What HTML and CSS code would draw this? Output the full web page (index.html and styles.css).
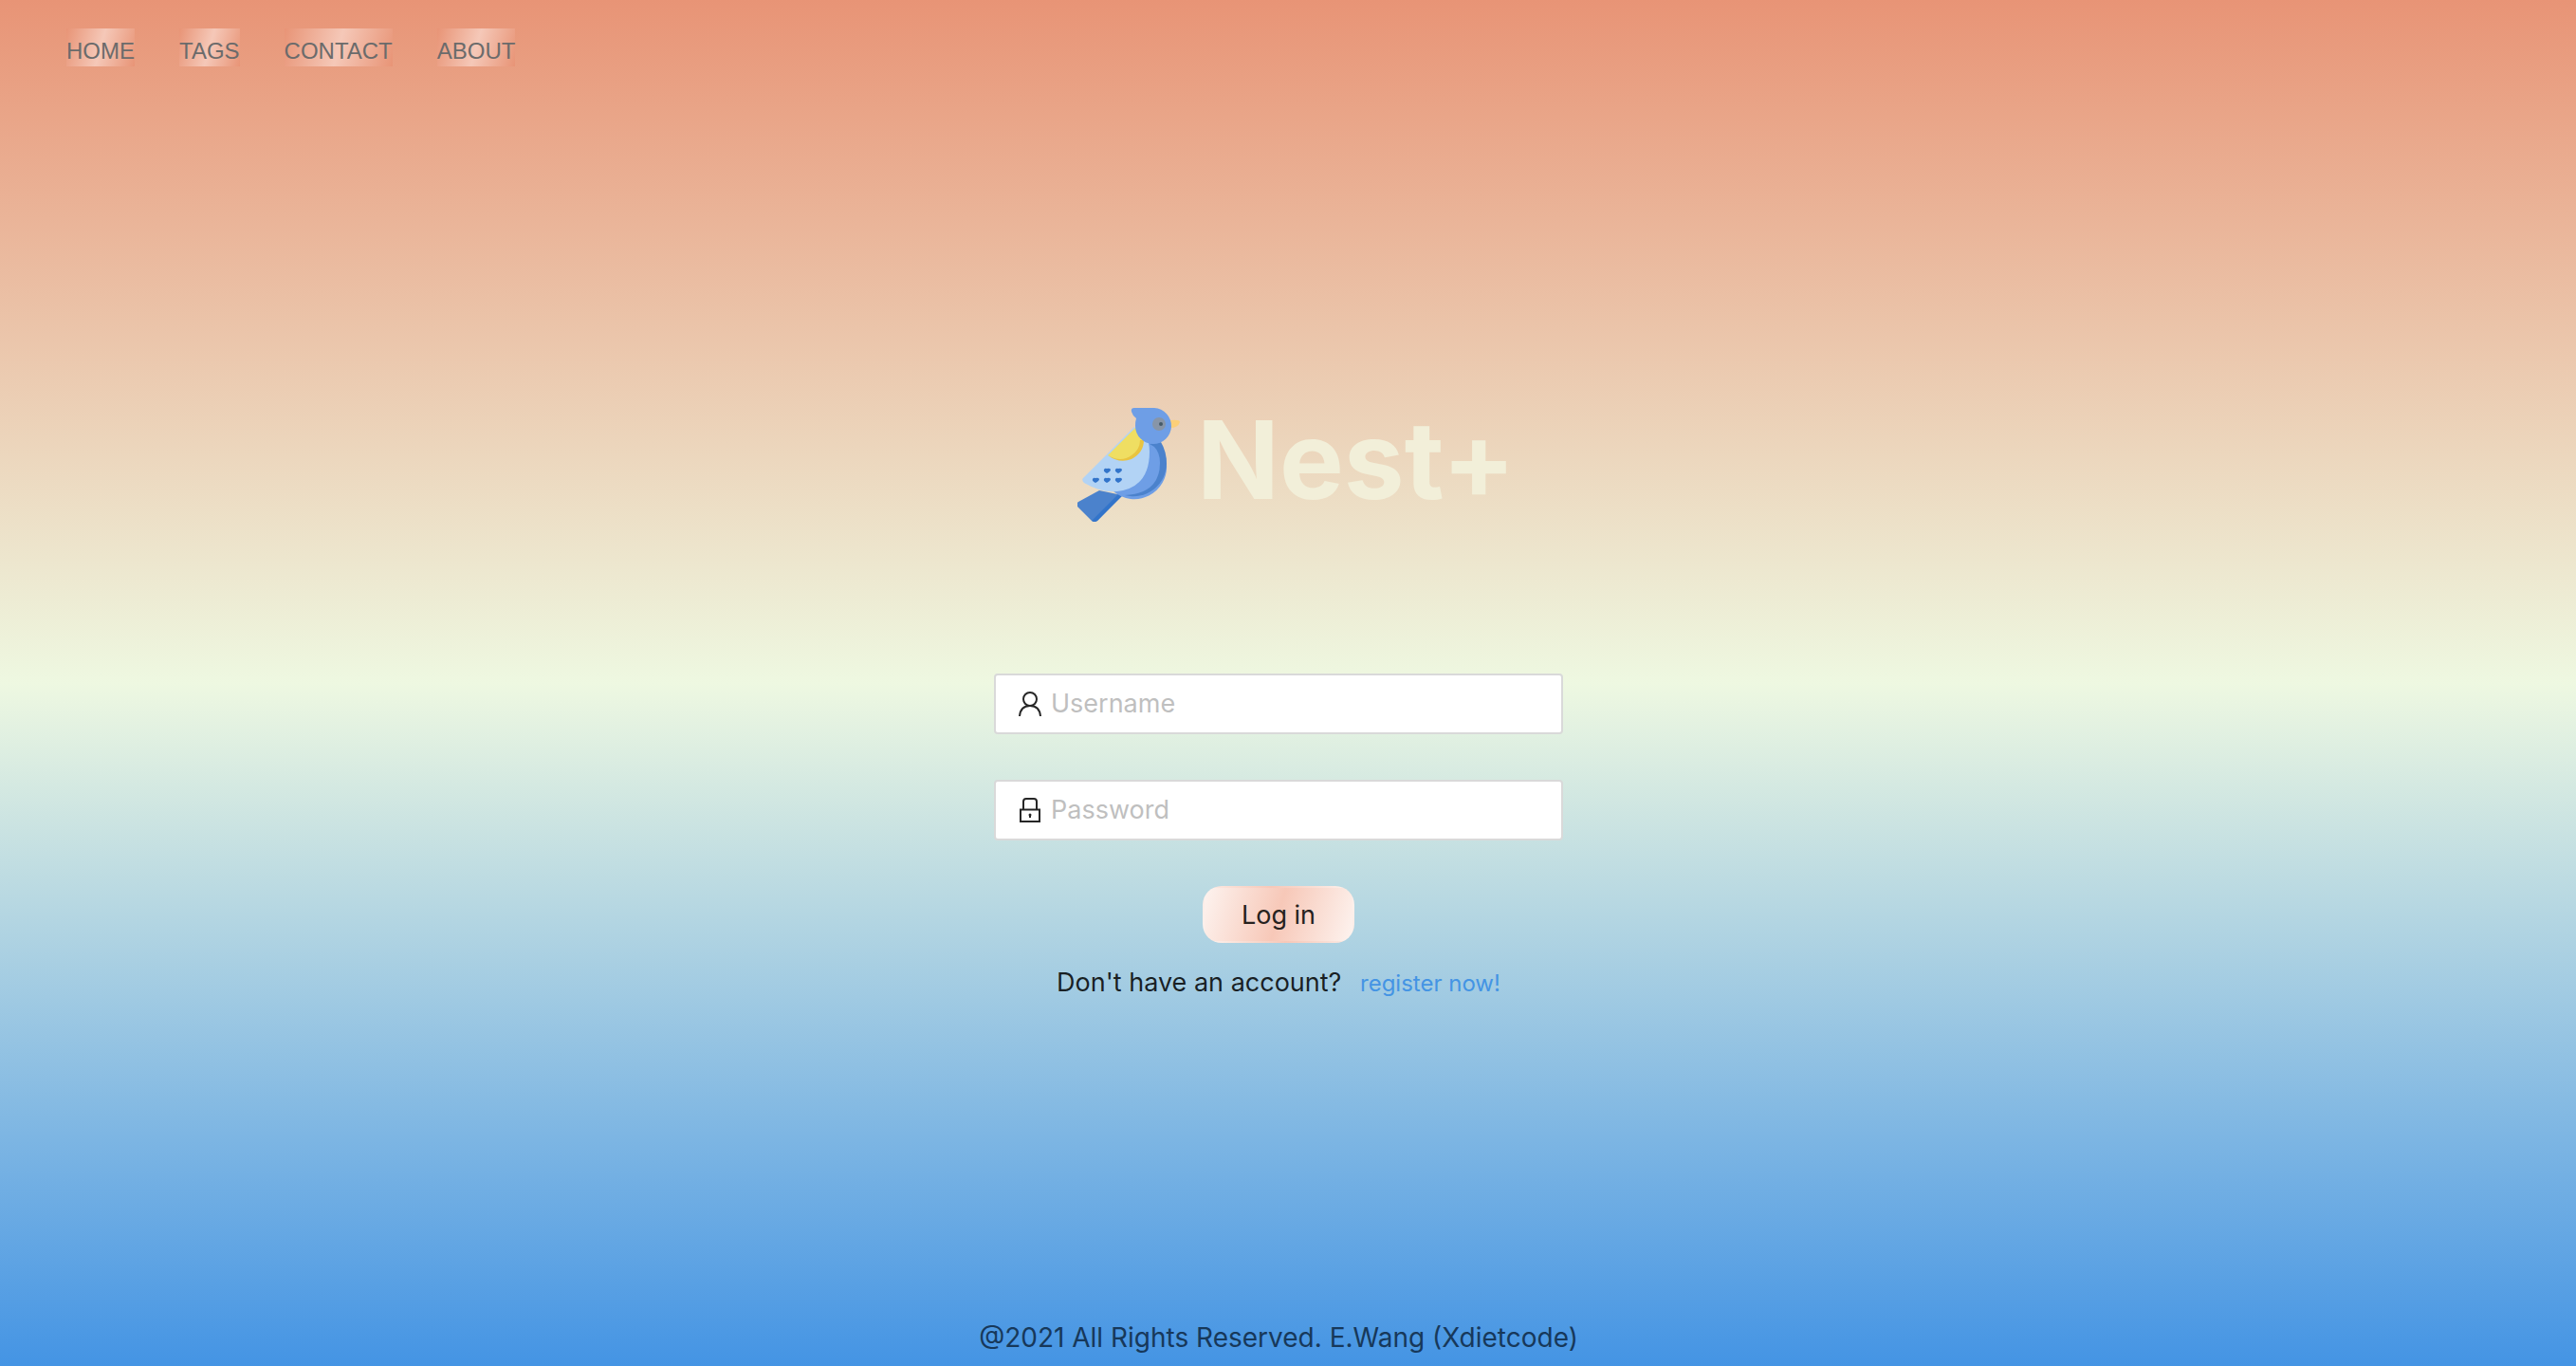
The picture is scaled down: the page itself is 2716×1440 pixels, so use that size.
FILE: index.html
```html
<!DOCTYPE html>
<html lang="en">
<head>
<meta charset="utf-8">
<meta name="viewport" content="width=device-width, initial-scale=1">
<title>Nest+</title>
<link rel="stylesheet" href="styles.css">
</head>
<body>
<div class="page">
  <nav class="nav">
    <a class="nav-link" href="#home">HOME</a>
    <a class="nav-link" href="#tags">TAGS</a>
    <a class="nav-link" href="#contact">CONTACT</a>
    <a class="nav-link" href="#about">ABOUT</a>
  </nav>
  <main class="login">
    <div class="brand">
      <svg class="bird" viewBox="16 0 110 120" aria-hidden="true">
        <path d="M17 99 39 87 63 92 37 119Q34 121 31 119L16 104Q14 101 17 99Z" fill="#4b82cc"/>
        <path d="M31 119 62 88 64 92 37 119Q34 121 31 119Z" fill="#3274ca"/>
        <path d="M86 32Q111 42 110 60A34 34 0 0 1 54 88Z" fill="#6e9ee6"/>
        <path d="M92 38 104 36Q110 46 110 59A35 35 0 0 1 66 92Q103 90 103 58 103 47 97 41Z" fill="#4b82cc"/>
        <path d="M76 20 22 74Q20 76 23 79 42 90 58 88 92 84 92 46 92 41 91 37Z" fill="#b2d3f5"/>
        <path d="M78 20 48 50Q64 60 77 49 86 41 86 30Z" fill="#efde62"/>
        <path d="M82 34H86Q86 47 73 54 60 59 48 50 62 58 73 50 82 44 82 34Z" fill="#e9c440"/>
        <path d="M114 13Q124 12 124 15 122 21 114 21Z" fill="#fccf78"/>
        <path d="M97 0H76Q72 0 73 4 74 8 78 11 77 14 77 19A19 19 0 1 0 97 0Z" fill="#6e9ee6"/>
        <circle cx="102" cy="17" r="7" fill="#8795a8"/>
        <circle cx="104" cy="17" r="2" fill="#455a68"/>
        <g fill="#3274ca">
          <path id="heart" d="M47 69Q43 67 44 65 45 63 47 64 50 63 51 65 51 67 47 69Z"/>
          <use href="#heart" x="12"/>
          <use href="#heart" x="-12" y="10"/>
          <use href="#heart" y="10"/>
          <use href="#heart" x="12" y="10"/>
        </g>
      </svg>
      <h1 class="title">Nest+</h1>
    </div>
    <form class="form">
      <label class="field">
        <svg class="icon" viewBox="0 0 24 26" fill="none" stroke="#262626" stroke-width="2" aria-hidden="true"><circle cx="12" cy="8" r="7"/><path d="M1 26Q2 15 12 15T23 26"/></svg>
        <input class="input" type="text" placeholder="Username" aria-label="Username">
      </label>
      <label class="field">
        <svg class="icon" viewBox="0 0 24 26" fill="none" stroke="#262626" stroke-width="2" aria-hidden="true"><path d="M2 12.500H22V25H2ZM5 12V4Q5 1 8 1H16Q19 1 19 4V12M12 17V21"/><circle cx="12" cy="18" r="1.500" fill="#262626" stroke="none"/></svg>
        <input class="input" type="password" placeholder="Password" aria-label="Password">
      </label>
      <button class="submit" type="submit">Log in</button>
    </form>
    <p class="signup">Don't have an account? <a class="register" href="#register">register now!</a></p>
  </main>
  <footer class="footer">@2021 All Rights Reserved. E.Wang (Xdietcode)</footer>
</div>
</body>
</html>
```
FILE: styles.css
```css
* { box-sizing: border-box; }

body {
  margin: 0;
  font-family: Inter, "Liberation Sans", sans-serif;
  color: rgba(0, 0, 0, 0.85);
}

.page {
  min-height: 100vh;
  display: flex;
  flex-direction: column;
  padding-right: 20px;
  background: linear-gradient(180deg, #e89476 0%, #eef8e1 50%, #4494e4 100%);
}

.nav {
  display: flex;
  gap: 47px;
  padding: 30px 70px;
  font: 24px/40px "Liberation Sans", Arial, sans-serif;
}

.nav-link {
  height: 40px;
  padding-top: 4px;
  color: #6b6b6b;
  text-decoration: none;
  background: linear-gradient(106deg, #e89476, #f5c8b8, #e89476);
}

.login {
  flex: 1;
  display: flex;
  flex-direction: column;
  align-items: center;
  padding-top: 330px;
}

.brand {
  display: flex;
  align-items: flex-start;
  gap: 16px;
  padding-left: 38px;
  margin-bottom: 160px;
}

.bird {
  width: 110px;
  height: 120px;
}

.title {
  margin: 0;
  font-size: 114px;
  line-height: 110px;
  font-weight: 700;
  color: #f2efd9;
}

.form {
  width: 100%;
  max-width: 600px;
  display: flex;
  flex-direction: column;
  align-items: center;
  gap: 48px;
}

.field {
  width: 100%;
  height: 64px;
  display: flex;
  align-items: center;
  gap: 10px;
  padding: 0 24px;
  background: #fff;
  border: 2px solid #d9d9d9;
  border-radius: 4px;
}

.icon {
  width: 24px;
  height: 26px;
  flex: none;
}

.input {
  flex: 1;
  min-width: 0;
  padding: 0;
  border: 0;
  outline: 0;
  background: none;
  font: 27px/36px Inter, sans-serif;
  color: inherit;
}

.input::placeholder { color: #bfbfbf; opacity: 1; }

.submit {
  width: 160px;
  height: 60px;
  padding: 2px 0 0;
  border: 2px solid transparent;
  border-radius: 20px;
  background: linear-gradient(106deg, #fdf3ef, #f7c8b8, #fdf3ef);
  font: 27px/40px Inter, sans-serif;
  color: #262220;
}

.signup {
  margin: 20px 0 0;
  font-size: 27px;
  line-height: 44px;
}

.register {
  margin-left: 12px;
  font-size: 24px;
  color: #4494e4;
  text-decoration: none;
}

.footer {
  padding: 8px 0;
  font-size: 28px;
  line-height: 44px;
  text-align: center;
  color: #17385a;
}
```
